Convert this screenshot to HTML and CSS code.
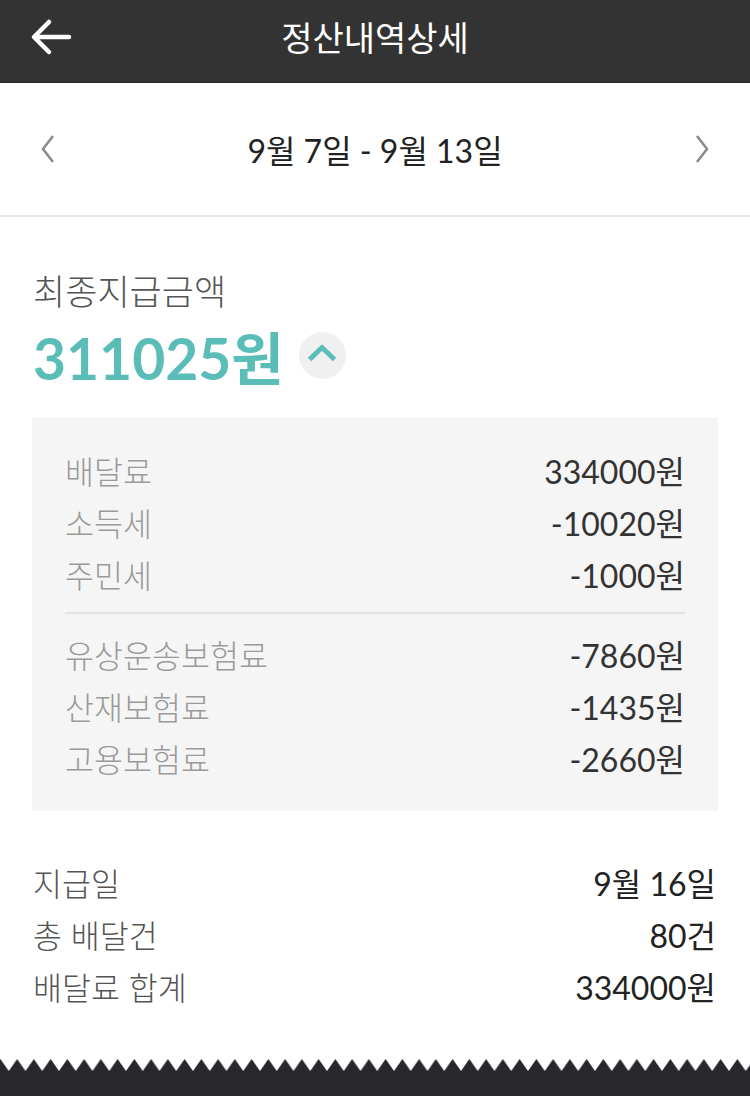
FILE: index.html
```html
<!DOCTYPE html>
<html lang="ko">
<head>
    <meta charset="UTF-8">
    <meta name="viewport" content="width=device-width, initial-scale=1.0">
    <title>정산내역상세</title>
    <link rel="stylesheet" href="styles.css">
</head>
<body>
    <div class="header">
        <svg class="back" width="44" height="44" viewBox="0 0 44 44">
            <path d="M40 21 H6 M20 6 L5 21 L20 36" fill="none" stroke="#fff" stroke-width="4.5" stroke-linecap="round" stroke-linejoin="round"/>
        </svg>
        <h1>정산내역상세</h1>
    </div>

    <div class="period">
        <svg class="chev" width="20" height="30" viewBox="0 0 20 30">
            <path d="M15 2 L5 15 L15 28" fill="none" stroke="#8a8a8a" stroke-width="2.5"/>
        </svg>
        <span class="period-text">9월 7일 - 9월 13일</span>
        <svg class="chev" width="20" height="30" viewBox="0 0 20 30">
            <path d="M5 2 L15 15 L5 28" fill="none" stroke="#8a8a8a" stroke-width="2.5"/>
        </svg>
    </div>

    <div class="main">
        <p class="total-label">최종지급금액</p>
        <div class="total">
            <span class="total-amount">311025원</span>
            <span class="toggle">
                <svg width="30" height="18" viewBox="0 0 30 18">
                    <path d="M2.5 15.5 L15 3.5 L27.5 15.5" fill="none" stroke="#5bbdb8" stroke-width="5" stroke-linejoin="round"/>
                </svg>
            </span>
        </div>

        <div class="breakdown">
            <div class="row"><span>배달료</span><span class="val">334000원</span></div>
            <div class="row"><span>소득세</span><span class="val">-10020원</span></div>
            <div class="row"><span>주민세</span><span class="val">-1000원</span></div>
            <div class="divider"></div>
            <div class="row"><span>유상운송보험료</span><span class="val">-7860원</span></div>
            <div class="row"><span>산재보험료</span><span class="val">-1435원</span></div>
            <div class="row"><span>고용보험료</span><span class="val">-2660원</span></div>
        </div>

        <div class="summary">
            <div class="row"><span>지급일</span><span class="val">9월 16일</span></div>
            <div class="row"><span>총 배달건</span><span class="val">80건</span></div>
            <div class="row"><span>배달료 합계</span><span class="val">334000원</span></div>
        </div>
    </div>

    <div class="footer">
        <svg class="zigzag" width="100%" height="12">
            <defs>
                <pattern id="teeth" width="16.75" height="12" patternUnits="userSpaceOnUse" x="-8">
                    <path d="M0 12 L8.375 0 L16.75 12 Z" fill="#28282c"/>
                </pattern>
            </defs>
            <rect width="100%" height="12" fill="url(#teeth)"/>
        </svg>
        <div class="footer-fill"></div>
    </div>
</body>
</html>
```

FILE: styles.css
```css
* {
    padding: 0;
    margin: 0;
    box-sizing: border-box;
}

body {
    width: 750px;
    height: 1096px;
    display: flex;
    flex-direction: column;
    background: #fff;
    color: #222;
    font-family: 'Lato', 'Noto Sans CJK KR', sans-serif;
    overflow: hidden;
}

.header {
    height: 83px;
    background: #333;
    border-bottom: 1px solid #262626;
    display: flex;
    align-items: center;
    justify-content: center;
    padding-bottom: 10px;
    position: relative;
}

.back {
    position: absolute;
    left: 29px;
    top: 16px;
}

.header h1 {
    color: #fff;
    font-family: 'Noto Sans CJK KR', sans-serif;
    font-weight: 400;
    font-size: 34px;
}

.period {
    height: 134px;
    border-bottom: 2px solid #e6e6e6;
    display: flex;
    align-items: center;
    justify-content: space-between;
    padding: 0 38px;
}

.period-text {
    font-size: 32px;
    color: #222;
}

.main {
    padding-top: 51px;
}

.total-label {
    padding: 0 33px;
    font-family: 'Noto Sans CJK KR', sans-serif;
    font-weight: 300;
    font-size: 35px;
    color: #555;
    line-height: 44px;
}

.total {
    display: flex;
    align-items: center;
    gap: 15px;
    padding: 0 33px;
    height: 68px;
    margin-top: 9px;
}

.total-amount {
    font-size: 57px;
    font-weight: 700;
    color: #5bbdb8;
}

.toggle {
    width: 47px;
    height: 47px;
    border-radius: 50%;
    background: #f0f0f0;
    display: flex;
    align-items: center;
    justify-content: center;
    padding-bottom: 4px;
}

.breakdown {
    margin: 29px 32px 0;
    background: #f5f5f5;
    padding: 26px 33px 27px;
}

.row {
    display: flex;
    justify-content: space-between;
    height: 52px;
    align-items: center;
    font-size: 32px;
}

.row span:first-child {
    font-family: 'Noto Sans CJK KR', sans-serif;
    font-weight: 300;
    font-size: 31.5px;
}

.breakdown .row {
    color: #9a9a9a;
}

.breakdown .val {
    color: #333;
}

.divider {
    height: 2px;
    background: #e3e3e3;
    margin: 12px 0 14px;
}

.summary {
    padding: 45px 34px 0 33px;
}

.summary .row {
    color: #555;
}

.summary .val {
    color: #222;
}

.footer {
    margin-top: auto;
    height: 37px;
    display: flex;
    flex-direction: column;
}

.zigzag {
    display: block;
}

.footer-fill {
    flex: 1;
    background: #28282c;
}
```
